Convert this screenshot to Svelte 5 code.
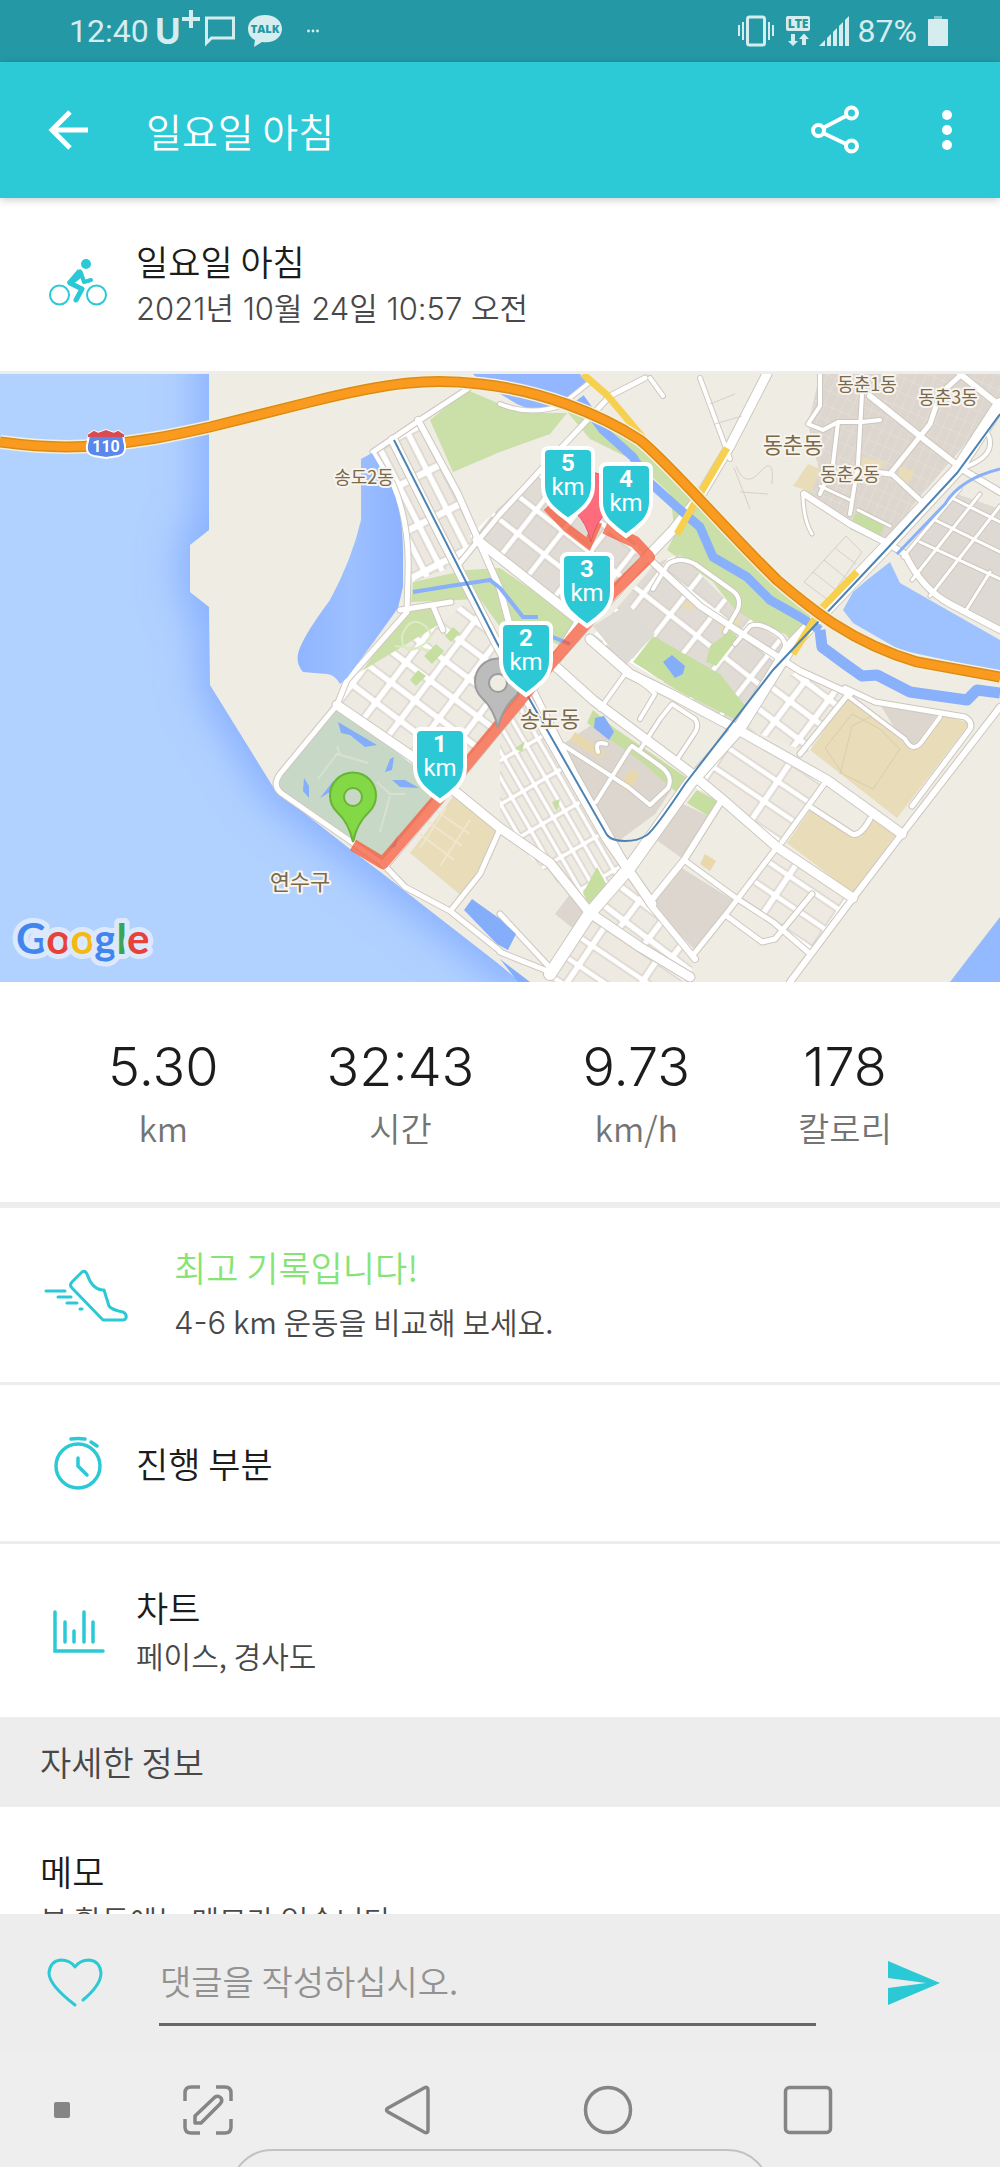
<script lang="ts">
  type Road = { d: string; w: number };

  const stats = [
    { value: "5.30", unit: "km" },
    { value: "32:43", unit: "시간" },
    { value: "9.73", unit: "km/h" },
    { value: "178", unit: "칼로리" },
  ];

  const roads: Road[] = [
    // coast road
    { d: "M500 577 450 537 405 513 383 490 353 469 281 419Q272 411 280 400L337 331 347 306 407 238 408 200Q410 150 393 110L373 78 420 46 475 10", w: 5 },
    { d: "M400 236 451 228M433 232 443 256", w: 5 },
    // north to south
    { d: "M418 46 458 120 500 215 520 290 575 400 620 480 650 530 695 585", w: 6 },
    { d: "M393 66 440 160 497 270 530 330 607 465 652 530", w: 9 },
    { d: "M385 490 437 428 500 352 553 288 647 183 673 156 700 122 730 72 767 0", w: 9 },
    { d: "M550 600 590 539 630 493 690 409 740 353 790 273 883 176 957 96 1000 30", w: 12 },
    { d: "M337 331 413 383 500 454 550 489 590 539 640 573 690 603", w: 9 },
    { d: "M477 166 500 184 580 247 553 290 593 326 687 396 723 426 777 473 853 524", w: 9 },
    { d: "M590 265 630 300 673 321 733 353 827 406 902 460", w: 9 },
    { d: "M647 183 700 232 747 263 800 297 850 320", w: 6 },
    { d: "M459 190 500 140 560 75 610 22 645 4", w: 5 },
    { d: "M500 30Q530 42 560 32L590 8", w: 4 },
    { d: "M700 4 730 85M650 4 663 22", w: 4 },
    { d: "M902 460 853 524 790 608M902 460 1000 333", w: 6 },
    { d: "M684 486 736 524 773 548 808 578", w: 5 },
    { d: "M777 473 730 535 694 580", w: 5 },
    { d: "M720 429 684 486 650 528", w: 6 },
    { d: "M850 318 800 380M827 406 782 468M812 520 775 565 762 568 728 543", w: 5 },
    { d: "M845 314 875 328 965 343Q973 348 970 355L912 432", w: 5 },
    { d: "M848 322 905 365Q912 378 920 370L940 343", w: 4 },
    { d: "M812 434 852 460Q860 463 870 445", w: 5 },
    { d: "M500 540 553 597M500 578 550 598M500 455 480 500 452 535", w: 5 },
    { d: "M563 371 628 413 650 431 668 414Q674 402 660 392L632 372M630 374 596 428M598 378Q594 366 606 370", w: 4 },
    { d: "M640 376 660 345 672 330 695 345Q700 352 694 360L678 384M600 335 625 300Q640 305 655 320L640 345", w: 4 },
    { d: "M653 215 668 190Q680 182 695 190L730 215Q742 222 738 235L725 258", w: 4 },
    { d: "M735 270 750 252Q760 248 775 258 788 266 784 275L775 290", w: 4 },
    // east of the canal
    { d: "M804 120 850 150 885 168 905 180Q922 215 950 230L1000 256", w: 6 },
    { d: "M960 0 1000 32M870 22 925 66 965 97 1000 118", w: 6 },
    { d: "M820 0V32L808 50 823 56 838 48 862 48 880 46M838 48 833 90 820 120M862 20 858 90 850 140", w: 4 },
    { d: "M962 0 940 20 930 50 890 100 875 98M892 100 922 128", w: 5 },
    { d: "M803 120Q803 145 812 160M820 112 850 126M858 136 890 152", w: 3 },
    { d: "M960 95Q990 85 990 70T982 62", w: 4 },
    { d: "M960 115 903 183M1000 132 930 222M952 124 1000 148M935 146 1000 178M920 168 1000 205M980 120 912 206M990 198 965 238", w: 3 },
  ];

  const markers = [
    { n: 1, x: 440, y: 354 },
    { n: 2, x: 526, y: 248 },
    { n: 3, x: 587, y: 179 },
    { n: 5, x: 568, y: 73 },
    { n: 4, x: 626, y: 89 },
  ];

  const places = [
    { name: "송도2동", x: 364, y: 110, big: false },
    { name: "동춘1동", x: 867, y: 17, big: false },
    { name: "동춘3동", x: 948, y: 30, big: false },
    { name: "동춘2동", x: 850, y: 107, big: false },
    { name: "동춘동", x: 793, y: 79, big: true },
    { name: "송도동", x: 550, y: 353, big: true },
    { name: "연수구", x: 300, y: 516, big: true },
  ];

  const pin = "M0 0Q-4 -19 -16 -30A23 23 0 1 1 16 -30Q4 -19 0 0Z";
  const sea = "M0 0H209V156L190 171V218L209 233 210 311 275 416 350 475 383 500 500 591 520 608H0Z";
  const highway =
    "M0 68Q60 76 100 71C140 68 170 62 210 53L310 28C390 8 430 4 480 10 540 16 600 40 640 66 670 90 720 150 777 206 810 234 850 268 917 288L1000 303";

  let comment = "";
</script>

<div class="screen">
  <div class="status-bar">
    <span class="clock">12:40</span>
    <svg class="carrier" width="46" height="40" viewBox="0 0 46 40" aria-hidden="true">
      <text x="0" y="36" font-size="35" font-weight="700">U</text>
      <path d="M27 11H45M36 2V20" stroke="currentColor" stroke-width="4" />
    </svg>
    <svg class="chat" width="30" height="30" viewBox="0 0 30 30" aria-hidden="true">
      <path d="M1.500 27V2H28.500V22H6.500Z" fill="none" stroke="currentColor" stroke-width="3" />
    </svg>
    <svg class="talk" width="36" height="34" viewBox="0 0 36 34" aria-hidden="true">
      <path d="M18 1C8 1 1 7 1 15 1 20 4 24 8 26L7 33 15 28C27 30 35 23 35 15 35 7 28 1 18 1Z" fill="currentColor" />
      <text x="18" y="19" font-size="11" font-weight="800" text-anchor="middle" fill="#2498a5">TALK</text>
    </svg>
    <svg width="12" height="4" viewBox="0 0 12 4" aria-hidden="true">
      <circle cx="1.500" cy="2" r="1.400" fill="currentColor" />
      <circle cx="6" cy="2" r="1.400" fill="currentColor" />
      <circle cx="10.500" cy="2" r="1.400" fill="currentColor" />
    </svg>

    <div class="status-right">
      <svg width="36" height="32" viewBox="0 0 36 32" aria-hidden="true">
        <rect x="9.500" y="2" width="17" height="28" rx="2" fill="none" stroke="currentColor" stroke-width="3" />
        <path d="M1 10V21M5 7V25M31 7V25M35 10V21" stroke="currentColor" stroke-width="2" />
      </svg>
      <svg class="lte" width="24" height="32" viewBox="0 0 24 32" aria-hidden="true">
        <rect y="1" width="24" height="15" rx="2" fill="currentColor" />
        <text x="12" y="13" font-size="12" font-weight="800" text-anchor="middle" fill="#2498a5">LTE</text>
        <path d="M5 19H9V26H12L7 31 2 26H5ZM16 30H20V24H23L18 18.500 13 24H16Z" fill="currentColor" />
      </svg>
      <svg class="signal" width="30" height="32" viewBox="0 0 30 32" aria-hidden="true">
        <path d="M0 31 6 25V31ZM8 31V23L12 19V31ZM14 31V17L18 13V31ZM20 31V11L24 7V31ZM26 31V5L30 1V31Z" fill="currentColor" />
      </svg>
      <span class="level">87%</span>
      <svg width="20" height="32" viewBox="0 0 20 32" aria-hidden="true">
        <rect x="6" y="1" width="8" height="3" fill="currentColor" opacity="0.5" />
        <rect y="4" width="20" height="27" rx="1" fill="currentColor" />
      </svg>
    </div>
  </div>

  <header class="app-bar">
    <button class="icon-button" aria-label="뒤로">
      <svg width="42" height="42" viewBox="0 0 42 42">
        <path d="M22 3 4 21 22 39M4 21H40" fill="none" stroke="#fff" stroke-width="5" />
      </svg>
    </button>
    <h1>일요일 아침</h1>
    <button class="icon-button share" aria-label="공유">
      <svg width="50" height="50" viewBox="0 0 50 50">
        <g fill="none" stroke="#fff" stroke-width="4">
          <path d="M13 23 36 11M13 28 36 39" />
          <circle cx="8.500" cy="25.500" r="5.500" />
          <circle cx="41.500" cy="8" r="5.500" />
          <circle cx="41.500" cy="41" r="5.500" />
        </g>
      </svg>
    </button>
    <button class="icon-button" aria-label="더보기">
      <svg width="10" height="42" viewBox="0 0 10 42">
        <circle cx="5" cy="6" r="5" fill="#fff" />
        <circle cx="5" cy="21" r="5" fill="#fff" />
        <circle cx="5" cy="36" r="5" fill="#fff" />
      </svg>
    </button>
  </header>

  <main>
    <section class="row">
      <svg class="row-icon" width="60" height="60" viewBox="0 0 60 60" aria-hidden="true">
        <g fill="none" stroke="#2bc9d6">
          <circle cx="11.500" cy="40" r="9.500" stroke-width="2" />
          <circle cx="48.500" cy="40" r="9.500" stroke-width="2" />
          <path d="M32 17 22 28 34 34 28 45" stroke-width="5" stroke-linecap="round" stroke-linejoin="round" />
          <path d="M33 18 36 27 43 25" stroke-width="4" stroke-linecap="round" stroke-linejoin="round" />
        </g>
        <path d="M30 14 19 27Q20 31 24 30L33 23Z" fill="#2bc9d6" />
        <circle cx="38" cy="9" r="5" fill="#2bc9d6" />
      </svg>
      <div class="row-text">
        <h2>일요일 아침</h2>
        <p class="numeric">2021년 10월 24일 10:57 오전</p>
      </div>
    </section>

    <svg class="map" viewBox="0 0 1000 608" role="img" aria-label="경로 지도">
      <defs>
        <clipPath id="sea-clip"><path d={sea} /></clipPath>
        <filter id="shore" x="-30%" y="-30%" width="160%" height="160%">
          <feGaussianBlur stdDeviation="22" />
        </filter>
        <linearGradient id="lake" x1="0" x2="1">
          <stop offset="0" stop-color="#8fb5ff" />
          <stop offset="0.5" stop-color="#9dc0ff" />
          <stop offset="1" stop-color="#8db3ff" />
        </linearGradient>
        <pattern id="strips" width="44" height="16" patternUnits="userSpaceOnUse" patternTransform="translate(394 66) rotate(63)">
          <rect width="44" height="16" fill="#fff" />
          <rect x="3" y="4" width="36" height="9" fill="#ece8df" stroke="#cdc5bd" />
        </pattern>
        <pattern id="blocks" width="34" height="30" patternUnits="userSpaceOnUse" patternTransform="translate(500 184) rotate(38)">
          <rect width="34" height="30" fill="#fff" />
          <rect x="2" y="3" width="28" height="24" fill="#e0dbd4" stroke="#cdc5bd" />
        </pattern>
        <pattern id="small" width="30" height="25" patternUnits="userSpaceOnUse" patternTransform="translate(337 331) rotate(37)">
          <rect width="30" height="25" fill="#fff" />
          <rect x="3" y="3" width="23" height="18" fill="#edeae2" stroke="#cdc5bd" />
        </pattern>
        <pattern id="lots" width="62" height="24" patternUnits="userSpaceOnUse" patternTransform="translate(740 353) rotate(34)">
          <rect width="62" height="24" fill="#fff" />
          <rect x="3" y="3" width="55" height="18" fill="#eeeae1" stroke="#cdc5bd" />
        </pattern>
        <pattern id="slim" width="38" height="13" patternUnits="userSpaceOnUse" patternTransform="translate(530 326) rotate(60)">
          <rect width="38" height="13" fill="#fff" />
          <rect x="2" y="2" width="33" height="8" fill="#edeae2" stroke="#cdc5bd" />
        </pattern>
        <pattern id="alleys" width="9" height="14" patternUnits="userSpaceOnUse" patternTransform="rotate(24)">
          <rect width="9" height="14" fill="#ddd6cf" />
          <path d="M0 0H9M0 0V14" stroke="#e8e2dc" />
        </pattern>
      </defs>

      <rect width="1000" height="608" fill="#efece4" />
      <g clip-path="url(#sea-clip)">
        <path d={sea} fill="#b1d1ff" />
        <path d="M222 -60V156L205 171V218L222 233 224 311 285 410 360 468 393 493 540 608" fill="none" stroke="#7fa8ff" stroke-width="40" filter="url(#shore)" />
      </g>
      <path d="M1000 543 950 608H1000Z" fill="#93b9ff" />
      <path d="M473 0H580L587 9 567 25Q540 42 517 30L480 8Z" fill="#92b6ff" />

      <!-- parks -->
      <g fill="#cbdfa8">
        <path d="M430 46 467 16 500 30 533 39H567L550 60 500 78 453 98Z" />
        <path d="M563 33 590 65 637 88 670 120 675 160 667 176 713 208 740 243 785 260 797 273 817 246 777 206 733 163 687 111 637 64 577 33Z" />
        <path d="M403 239 433 233 443 253 403 296 367 311 360 300Z" />
        <path d="M413 208 467 196 500 194 545 225 583 252 567 275 540 262 500 253 480 225 411 228Z" />
      </g>
      <path d="M337 333 413 386 437 429 383 486 353 466 280 416V400Z" fill="#c7d9c6" />

      <!-- built-up districts -->
      <path d="M373 78 420 46 477 166 460 190 413 208 408 190 400 130Z" fill="url(#strips)" />
      <path d="M470 162 560 75 598 125 647 183 585 250 500 184Z" fill="url(#blocks)" />
      <path d="M655 190 680 180 735 235 790 273 740 353 590 265Z" fill="url(#blocks)" />
      <path d="M443 248 468 226 520 290 553 290 500 352 437 410 337 331 347 306Z" fill="url(#small)" />
      <path d="M500 352 530 326 607 461 630 493 590 539 500 454Z" fill="url(#slim)" />
      <path d="M740 353 827 406 777 473 690 409Z" fill="url(#lots)" />
      <path d="M770 310 800 297 846 318 808 378 740 353Z" fill="url(#small)" />
      <path d="M590 539 640 573 690 603 680 608H550ZM736 524 777 473 853 524 808 578Z" fill="url(#lots)" />
      <path d="M590 539 630 493 650 525 695 580 690 603 640 573Z" fill="url(#small)" />
      <path d="M820 0H1000V30L918 125 885 168 850 150 800 120 820 100 808 50Z" fill="url(#alleys)" />
      <path d="M957 120 1000 135V256L930 220 905 182Z" fill="#ded9d2" />
      <path d="M563 370 593 350 640 382 672 415 655 440 620 466 605 460Z" fill="#dcd6cf" />
      <path d="M683 430 713 444 683 485 655 465Z" fill="#dcd6cf" />
      <path d="M680 493 733 526 694 575 650 530Z" fill="#dcd6cf" />
      <path d="M555 540 570 520 588 535 575 556Z" fill="#dcd6cf" />
      <path d="M593 252 628 230 655 260 625 292Z" fill="#dedad4" />
      <path d="M720 430 776 472 734 525 686 486Z" fill="#efece4" />

      <g fill="#e8dcb9">
        <path d="M847 324 910 373 940 341 970 349 897 444 810 376Z" />
        <path d="M810 436 860 463 873 443 897 459 853 519 787 469Z" />
        <path d="M453 423 500 456 463 523 410 479Z" />
        <path d="M575 358 605 378 600 385 570 366ZM632 395 640 402 627 417 618 410ZM705 480 716 487 710 497 700 490Z" fill="#ead8ad" />
        <path d="M793 112 808 90 820 95 812 118ZM862 83 885 88 880 96 860 92ZM900 92 915 98 908 110 898 104Z" />
        <path d="M718 258 732 240 742 246 730 262ZM682 230 690 225 696 232 688 238Z" />
      </g>
      <path d="M880 330 938 340 913 374Q906 368 895 355Z" fill="#dcd6cf" />
      <path d="M436 437 470 460M428 448 462 472M420 460 454 486M446 434 420 474M470 446 440 492" fill="none" stroke="#efe6cd" stroke-width="2" />

      <g fill="#c6dfa0">
        <path d="M633 288 653 262 720 300 746 333 735 345 680 318Z" />
        <path d="M593 336 613 353 690 406 677 419 643 389 587 349Z" />
        <path d="M697 416 720 429 710 443 687 429Z" />
        <path d="M597 493 608 513 590 534 583 519Z" />
        <path d="M855 140 868 137 885 150 877 168 850 155ZM515 375 525 367 522 378ZM552 428 560 425 557 438Z" />
        <path d="M424 282 436 270 444 277 432 290ZM410 306 418 296 426 302 416 312ZM445 262 453 253 460 259 451 268Z" />
        <path d="M710 272 730 257 738 264 716 292 706 288Z" />
      </g>

      <!-- roads, outlines first so that crossings stay open -->
      <g fill="none" stroke-linejoin="round" stroke-linecap="round">
        {#each roads as road}
          <path d={road.d} stroke="#cdc7bf" stroke-width={road.w + 2} />
        {/each}
        {#each roads as road}
          <path d={road.d} stroke="#fff" stroke-width={road.w} />
        {/each}
      </g>
      <path d="M840 400 852 352 872 342M825 374 852 340 880 355 900 375 873 415 843 400Z" fill="none" stroke="#d8ccb0" />
      <path d="M804 208 846 162 862 178 828 226ZM813 198 836 216M824 186 846 204M835 174 856 190M736 92Q745 115 760 98T772 110M734 94 750 135M740 118 768 120M710 30 735 20M715 50 742 42" fill="none" stroke="#d6d0c8" />

      <!-- water -->
      <path d="M361 85 372 79 380 93Q404 125 403 183V213L398 234 375 266 347 304 340 310Q334 300 327 300L303 298Q296 290 298 280 301 265 330 226 352 185 361 146Z" fill="url(#lake)" />
      <path d="M890 188 900 209 1000 266V298L960 289 900 276 853 249 843 236 853 218 867 206Z" fill="#9dc2ff" />
      <g fill="none" stroke="#88b0fb" stroke-linejoin="round">
        <path d="M580 24 603 56 633 83 647 106 677 133 700 153 713 183 747 203 770 226 800 243 820 256" stroke-width="9" />
        <path d="M820 256 822 273 845 290 862 302 877 301 910 318 967 326 977 316 1000 319" stroke-width="11" />
        <path d="M413 218 450 212 490 206 500 214 523 243 538 243M550 262 570 270" stroke-width="4" />
        <path d="M1000 95Q960 105 945 130L897 180" stroke-width="3" />
      </g>
      <g fill="#84aef9">
        <path d="M663 288 672 281 685 292 683 300 675 304Z" />
        <path d="M595 344 604 342 614 358 609 366 594 354Z" />
        <path d="M338 348 355 358 377 371 365 373 350 361 341 359Z" />
        <path d="M390 385 394 383 392 396 385 398ZM392 406 405 406 419 414 400 413ZM304 404 309 412 309 424 303 417ZM320 424 334 406 330 418ZM390 475 398 461 396 472Z" />
        <path d="M472 525 500 545 516 560 508 576 497 570 464 536Z" />
        <path d="M500 585 530 608H518Z" />
      </g>
      <path d="M318 405 337 380 368 389M337 372 340 380M377 408 390 420 405 420M390 422 380 458" fill="none" stroke="#d8e0d3" stroke-width="2" />
      <path d="M402 262Q410 240 425 252T415 275Q402 280 402 262ZM395 272 430 276" fill="none" stroke="#dcebc2" stroke-width="2" />

      <g fill="none" stroke="#f7d050" stroke-width="7">
        <path d="M583 0 607 21 650 72 690 115" />
        <path d="M727 74 700 120 677 160" />
        <path d="M857 198 820 236 793 280" />
      </g>
      <path d="M394 66 497 269 530 326 607 461Q612 467 625 467T647 461Q655 455 685 410L773 296 884 178 957 99 1000 40" fill="none" stroke="#4d84b3" stroke-width="2" />
      <path d={highway} fill="none" stroke="#f5efdd" stroke-width="14" />
      <path d={highway} fill="none" stroke="#d98d17" stroke-width="11" />
      <path d={highway} fill="none" stroke="#fa9a1f" stroke-width="8" />

      <g class="route-shield">
        <path d="M89 60 94 57 98 59 106 56 114 59 118 57 123 60 124 67Q128 80 118 82L106 84 94 82Q84 80 88 67Z" fill="#5a87ec" stroke="#fff" stroke-width="2" />
        <path d="M89 61 94 58 98 60 106 57 114 60 118 58 123 61V62H89Z" fill="#d94a51" stroke="#d94a51" stroke-width="2" />
        <text x="106" y="78" font-size="16" font-weight="700" text-anchor="middle" fill="#fff">110</text>
      </g>

      {#each places as place}
        <text class="place" class:big={place.big} x={place.x} y={place.y}>{place.name}</text>
      {/each}

      <path d="M353 471 383 489 437 426 500 350 553 287 613 218 649 183 635 168 605 154" fill="none" stroke="#f4593a" stroke-opacity="0.75" stroke-width="12" stroke-linejoin="round" />
      <path d="M547 133 567 154 588 170 598 148" fill="none" stroke="#f4593a" stroke-opacity="0.75" stroke-width="9" />
      <path d={pin} transform="translate(591 168)" fill="#fd6c7d" stroke="#e85565" />
      <g transform="translate(498 354)">
        <path d={pin} fill="#bcbcbc" stroke="#9c9c9c" stroke-width="2" />
        <circle cy="-45" r="9" fill="#efece4" stroke="#9c9c9c" stroke-width="2" />
      </g>
      <g transform="translate(353 468)">
        <path d={pin} fill="#83d846" stroke="#68b436" stroke-width="2" />
        <circle cy="-45" r="9" fill="#c7d9c6" stroke="#68b436" stroke-width="2" />
      </g>

      {#each markers as marker}
        <g class="marker" transform="translate({marker.x} {marker.y})">
          <path d="M-19 1H19Q25 1 25 7V39Q25 50 17 59 10 66 0 73 -10 66 -17 59 -25 50 -25 39V7Q-25 1 -19 1Z" fill="#2cc8d6" stroke="#fff" stroke-width="4" />
          <text class="marker-n" y="24">{marker.n}</text>
          <text y="48">km</text>
        </g>
      {/each}

      <text class="google" x="16" y="580"><tspan fill="#4285ee">G</tspan><tspan fill="#e4423a">o</tspan><tspan fill="#f4b912">o</tspan><tspan fill="#4285ee">g</tspan><tspan fill="#36a655">l</tspan><tspan fill="#e4423a">e</tspan></text>
    </svg>

    <dl class="stats">
      {#each stats as stat}
        <div class="stat">
          <dd>{stat.value}</dd>
          <dt>{stat.unit}</dt>
        </div>
      {/each}
    </dl>

    <section class="row record">
      <svg class="row-icon" width="84" height="60" viewBox="0 0 84 60" aria-hidden="true">
        <g fill="none" stroke="#2bc9d6" stroke-width="3" stroke-linecap="round" stroke-linejoin="round">
          <path d="M28 17 38 7Q41 5 43 9 48 24 58 25H60L65 41Q68 45 79 47 83 49 82 53 81 55 79 55H59L28 23Q25 20 28 17Z" />
          <path d="M2 26H21M14 32H27M23 38H33M36 44H38" />
        </g>
      </svg>
      <div class="row-text">
        <h2>최고 기록입니다!</h2>
        <p><span class="numeric">4-6</span> km 운동을 비교해 보세요.</p>
      </div>
    </section>

    <section class="row">
      <svg class="row-icon" width="60" height="60" viewBox="0 0 60 60" aria-hidden="true">
        <g fill="none" stroke="#2bc9d6" stroke-width="3.500" stroke-linecap="round">
          <circle cx="30" cy="33" r="22" />
          <path d="M30 25V33L39 42M23 6Q30 5 37 6M43 9 49 13" />
        </g>
      </svg>
      <div class="row-text">
        <h2>진행 부분</h2>
      </div>
    </section>

    <section class="row tall">
      <svg class="row-icon" width="60" height="60" viewBox="0 0 60 60" aria-hidden="true">
        <path d="M7 11V50H55M17 21V41M26 30V41M36 11V41M45 21V41" fill="none" stroke="#2bc9d6" stroke-width="3.500" stroke-linecap="round" />
      </svg>
      <div class="row-text">
        <h2>차트</h2>
        <p>페이스, 경사도</p>
      </div>
    </section>

    <h3 class="section-title">자세한 정보</h3>

    <section class="memo">
      <h2>메모</h2>
      <p>본 활동에는 메모가 없습니다.</p>
    </section>
  </main>

  <form class="comment-bar" on:submit|preventDefault>
    <button type="button" class="icon-button" aria-label="좋아요">
      <svg width="56" height="50" viewBox="0 0 56 50">
        <path d="M28 47Q2 27 2 15 3 3 14 2 23 2 28 9 33 2 42 2 53 3 54 15 54 27 36 42" fill="none" stroke="#2bc9d6" stroke-width="3" stroke-linecap="round" stroke-linejoin="round" />
      </svg>
    </button>
    <input type="text" bind:value={comment} placeholder="댓글을 작성하십시오." aria-label="댓글" />
    <button type="submit" class="icon-button" aria-label="보내기">
      <svg width="52" height="46" viewBox="0 0 52 46">
        <path d="M0 1 52 23 0 45V28L38 23 0 18Z" fill="#2bc9d6" />
      </svg>
    </button>
  </form>

  <nav class="nav-bar">
    <button class="icon-button dot" aria-label="고정">
      <svg width="16" height="16" viewBox="0 0 16 16"><rect width="16" height="16" rx="2" fill="#858585" /></svg>
    </button>
    <button class="icon-button" aria-label="캡처">
      <svg width="50" height="50" viewBox="0 0 50 50">
        <g fill="none" stroke="#858585" stroke-width="3.500" stroke-linejoin="round">
          <path d="M2 16V8Q2 2 8 2H17M33 2H42Q48 2 48 8V16M48 34V42Q48 48 42 48H33M17 48H8Q2 48 2 42V34" />
          <path d="M12 38V31L32 12Q35 10 38 13 40 16 37 19L18 38Z" />
        </g>
      </svg>
    </button>
    <button class="icon-button" aria-label="이전">
      <svg width="50" height="50" viewBox="0 0 50 50">
        <path d="M41 3Q45 1 45 5V45Q45 49 41 47L5 27Q2 25 5 23Z" fill="none" stroke="#858585" stroke-width="3.500" />
      </svg>
    </button>
    <button class="icon-button" aria-label="홈">
      <svg width="50" height="50" viewBox="0 0 50 50"><circle cx="25" cy="25" r="22.500" fill="none" stroke="#858585" stroke-width="3.500" /></svg>
    </button>
    <button class="icon-button" aria-label="최근 앱">
      <svg width="50" height="50" viewBox="0 0 50 50"><rect x="2.500" y="2.500" width="45" height="45" rx="4" fill="none" stroke="#858585" stroke-width="3.500" /></svg>
    </button>
    <div class="handle"></div>
  </nav>
</div>

<style>
  :global(body) {
    margin: 0;
    background: #fff;
  }

  .screen {
    display: flex;
    flex-direction: column;
    height: 100vh;
    font-family: "Noto Sans CJK KR", sans-serif;
    font-weight: 350;
    color: #1c1c1c;
  }

  h1,
  h2,
  h3,
  p,
  dl,
  dd {
    margin: 0;
    font-weight: 350;
  }

  svg {
    display: block;
    flex: none;
  }

  .icon-button {
    display: flex;
    align-items: center;
    justify-content: center;
    flex: none;
    padding: 0;
    border: 0;
    background: none;
    cursor: pointer;
  }

  .status-bar {
    display: flex;
    align-items: center;
    flex: none;
    height: 62px;
    padding: 0 52px 0 69px;
    background: #2498a5;
    color: #d5edef;
    font-family: Roboto, sans-serif;
    font-size: 32px;
    font-weight: 400;
  }

  .status-bar svg {
    overflow: visible;
  }

  .status-bar text {
    font-family: Inter, sans-serif;
    fill: currentColor;
  }

  .status-bar .talk text,
  .status-bar .lte text {
    font-family: "Open Sans", sans-serif;
    fill: #2498a5;
  }

  .carrier {
    margin: 0 4px 6px 6px;
  }

  .talk {
    margin: 0 24px 0 12px;
  }

  .status-right {
    display: flex;
    align-items: center;
    margin-left: auto;
  }

  .lte {
    margin-left: 12px;
  }

  .signal {
    margin: 0 9px;
  }

  .level {
    margin-right: 11px;
  }

  .app-bar {
    display: flex;
    align-items: center;
    flex: none;
    height: 136px;
    padding: 0 48px;
    background: #2cc9d7;
    box-shadow: 0 2px 8px rgba(0, 0, 0, 0.2);
    z-index: 1;
  }

  .app-bar h1 {
    flex: 1;
    margin-left: 56px;
    color: #fff;
    font-size: 39px;
    line-height: 52px;
  }

  .share {
    margin-right: 82px;
  }

  main {
    flex: 1;
    min-height: 0;
    overflow-y: auto;
    scrollbar-width: none;
  }

  .row {
    display: flex;
    align-items: center;
    min-height: 156px;
    padding: 0 48px;
    border-bottom: 3px solid #ededed;
  }

  .row:first-child,
  .row.tall {
    min-height: 173px;
  }

  .row.record {
    min-height: 174px;
    padding: 0 44px;
  }

  .row.tall {
    border-bottom: 0;
  }

  .row-text {
    margin-left: 28px;
  }

  h2 {
    font-size: 35px;
    line-height: 48px;
  }

  p {
    color: #484848;
    font-size: 30px;
    line-height: 48px;
  }

  .numeric {
    font-family: Inter, "Noto Sans CJK KR", sans-serif;
    font-size: 31px;
  }

  .map {
    width: 100%;
    height: auto;
  }

  .map text {
    font-family: Roboto, sans-serif;
    font-weight: 400;
  }

  .map .route-shield text {
    font-weight: 700;
  }

  .map .place {
    fill: #7b694c;
    stroke: #f7f4ee;
    stroke-width: 4px;
    stroke-linejoin: round;
    paint-order: stroke;
    font-family: "Noto Sans CJK KR", sans-serif;
    font-size: 18px;
    text-anchor: middle;
  }

  .map .place.big {
    font-size: 22px;
  }

  .map .marker text {
    fill: #fff;
    font-size: 24px;
    text-anchor: middle;
  }

  .map .marker .marker-n {
    font-weight: 700;
  }

  .map .google {
    font-family: Lato, sans-serif;
    font-size: 42px;
    font-weight: 700;
    stroke: #dce9fc;
    stroke-width: 10px;
    stroke-linejoin: round;
    paint-order: stroke;
  }

  .stats {
    display: flex;
    justify-content: space-evenly;
    padding: 49px 0;
    border-bottom: 6px solid #ededed;
  }

  .stat {
    text-align: center;
  }

  .stat dd {
    font-family: Inter, sans-serif;
    font-size: 54px;
    line-height: 72px;
  }

  .stat dt {
    color: #747474;
    font-size: 34px;
    line-height: 50px;
  }

  .record .row-text {
    display: grid;
    gap: 6px;
    margin-left: 46px;
  }

  .record h2 {
    color: #86e476;
  }

  .section-title {
    padding: 21px 40px;
    background: #ededed;
    color: #484848;
    font-size: 34px;
    line-height: 48px;
  }

  .memo {
    padding: 40px;
  }

  .comment-bar {
    display: flex;
    align-items: center;
    flex: none;
    height: 138px;
    padding: 0 60px 0 47px;
    background: #ededed;
  }

  .comment-bar input {
    flex: 1;
    min-width: 0;
    margin: 0 72px 0 56px;
    padding: 10px 1px 12px;
    border: 0;
    border-bottom: 3px solid #666;
    outline: 0;
    background: none;
    color: #1c1c1c;
    font: inherit;
    font-size: 34px;
    line-height: 60px;
  }

  .comment-bar input::placeholder {
    color: #929292;
    opacity: 1;
  }

  .nav-bar {
    position: relative;
    display: grid;
    grid-template-columns: 108fr 200fr 200fr 200fr 200fr 92fr;
    flex: none;
    height: 115px;
    overflow: hidden;
    background: #eee;
  }

  .dot {
    padding-left: 16px;
  }

  .handle {
    position: absolute;
    top: 97px;
    left: 23%;
    right: 23%;
    height: 80px;
    border: 2px solid #c2c2c2;
    border-radius: 48px;
  }
</style>
